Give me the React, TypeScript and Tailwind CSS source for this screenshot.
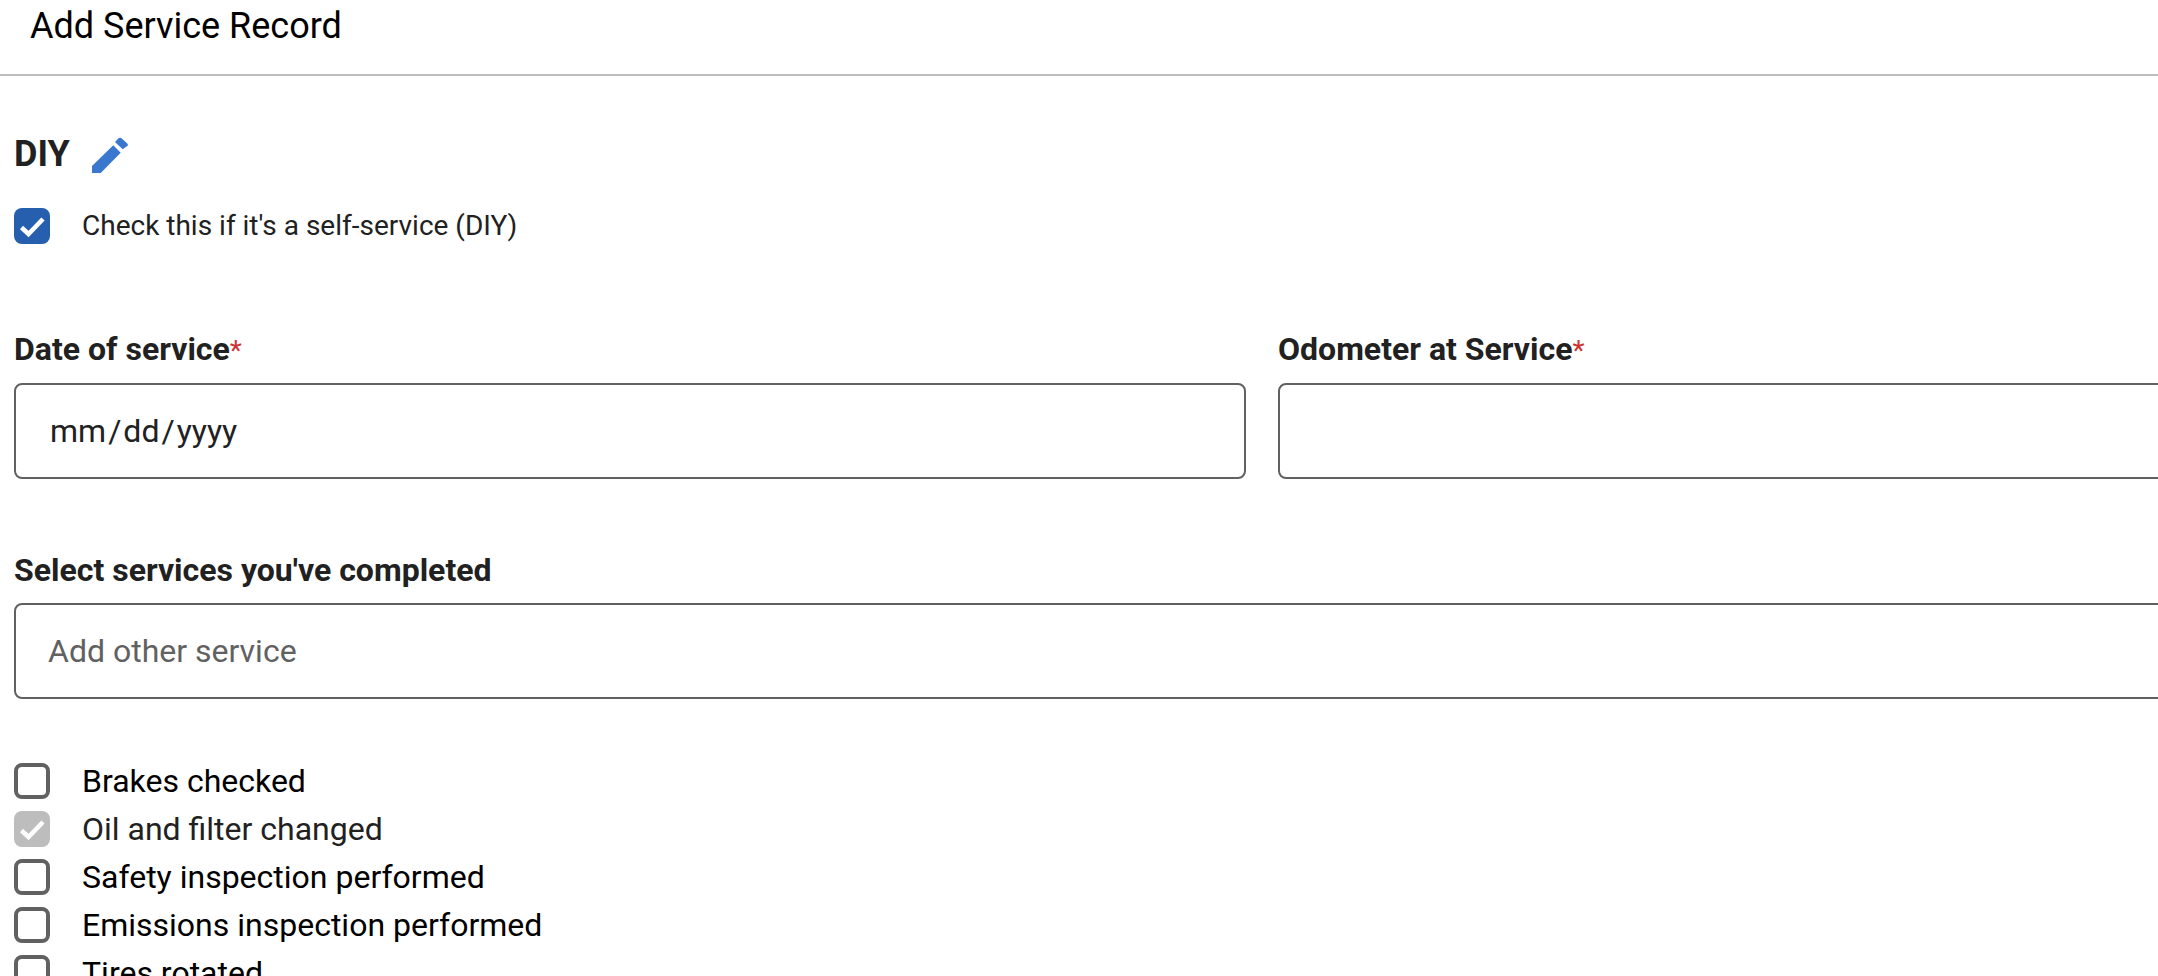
const roboto = "font-['Roboto',sans-serif]";

function Check({ state }: { state: "on" | "off" | "disabled" }) {
  const box =
    state === "on"
      ? "bg-[#255fad]"
      : state === "disabled"
        ? "bg-[#bdbdbd]"
        : "border-[4px] border-[#616161] bg-white";
  return (
    <span className={`flex h-[36px] w-[36px] shrink-0 items-center justify-center rounded-[8px] ${box}`}>
      {state !== "off" && (
        <svg viewBox="0 0 36 36" className="h-[36px] w-[36px]" fill="none">
          <path d="M7.5 19.5 L14.5 26 L29 11" stroke="white" strokeWidth="4.5" />
        </svg>
      )}
    </span>
  );
}

const rows: { label: string; state: "off" | "disabled"; color: string }[] = [
  { label: "Brakes checked", state: "off", color: "text-black" },
  { label: "Oil and filter changed", state: "disabled", color: "text-[#212121]" },
  { label: "Safety inspection performed", state: "off", color: "text-black" },
  { label: "Emissions inspection performed", state: "off", color: "text-black" },
  { label: "Tires rotated", state: "off", color: "text-black" },
];

export default function App() {
  return (
    <div className={`h-[976px] w-[2158px] overflow-hidden bg-white ${roboto}`}>
      <div className="flex h-[76px] items-start border-b-2 border-[#bdbdbd] pl-[30px] pt-[4px] text-[36px] leading-[44px] text-black">
        Add Service Record
      </div>
      <div className="w-[2512px] pl-[14px]">
        <div className="mt-[53px] flex h-[50px] items-center gap-[22px]">
          <span className="text-[36px] font-bold leading-[50px] text-[#212121]">DIY</span>
          <svg viewBox="0 0 36 36" className="mt-[2px] h-[36px] w-[36px]" fill="#3a78d0">
            <path d="M0 29 L21.3 8.3 L28.7 15.7 L8.7 36 L0 36 Z" />
            <path d="M23 5 L26.5 1.3 Q28 0 29.5 1.3 L35.3 6.5 Q36.5 8 35.3 9 L30.7 12.3 Z" />
          </svg>
        </div>
        <div className="mt-[29px] flex h-[36px] items-center gap-[32px]">
          <Check state="on" />
          <span className="text-[28px] leading-[36px] text-[#212121]">Check this if it's a self-service (DIY)</span>
        </div>
        <div className="mt-[86px] grid grid-cols-[1232px_1232px] gap-x-[32px]">
          <div>
            <div className="h-[53px] text-[32px] font-bold leading-[38px] text-[#212121]">
              Date of service<span className="text-[28px] font-normal text-[#cc3333]">*</span>
            </div>
            <div className="flex h-[96px] items-center rounded-[8px] border-2 border-[#616161] pl-[34px] text-[32px] text-[#212121]">
              mm<span className="mx-[2px]">/</span>dd<span className="mx-[2px]">/</span>yyyy
            </div>
          </div>
          <div>
            <div className="h-[53px] text-[32px] font-bold leading-[38px] text-[#212121]">
              Odometer at Service<span className="text-[28px] font-normal text-[#cc3333]">*</span>
            </div>
            <div className="h-[96px] rounded-[8px] border-2 border-[#616161]" />
          </div>
        </div>
        <div className="mt-[72px] h-[52px] text-[32px] font-bold leading-[38px] text-[#212121]">Select services you've completed</div>
        <div className="flex h-[96px] items-center rounded-[8px] border-2 border-[#616161] pl-[32px] text-[32px] text-[#616161]">
          Add other service
        </div>
        <div className="mt-[64px] flex flex-col gap-[12px]">
          {rows.map((r) => (
            <div key={r.label} className="flex h-[36px] items-center gap-[32px]">
              <Check state={r.state} />
              <span className={`text-[32px] leading-[36px] ${r.color}`}>{r.label}</span>
            </div>
          ))}
        </div>
      </div>
    </div>
  );
}
